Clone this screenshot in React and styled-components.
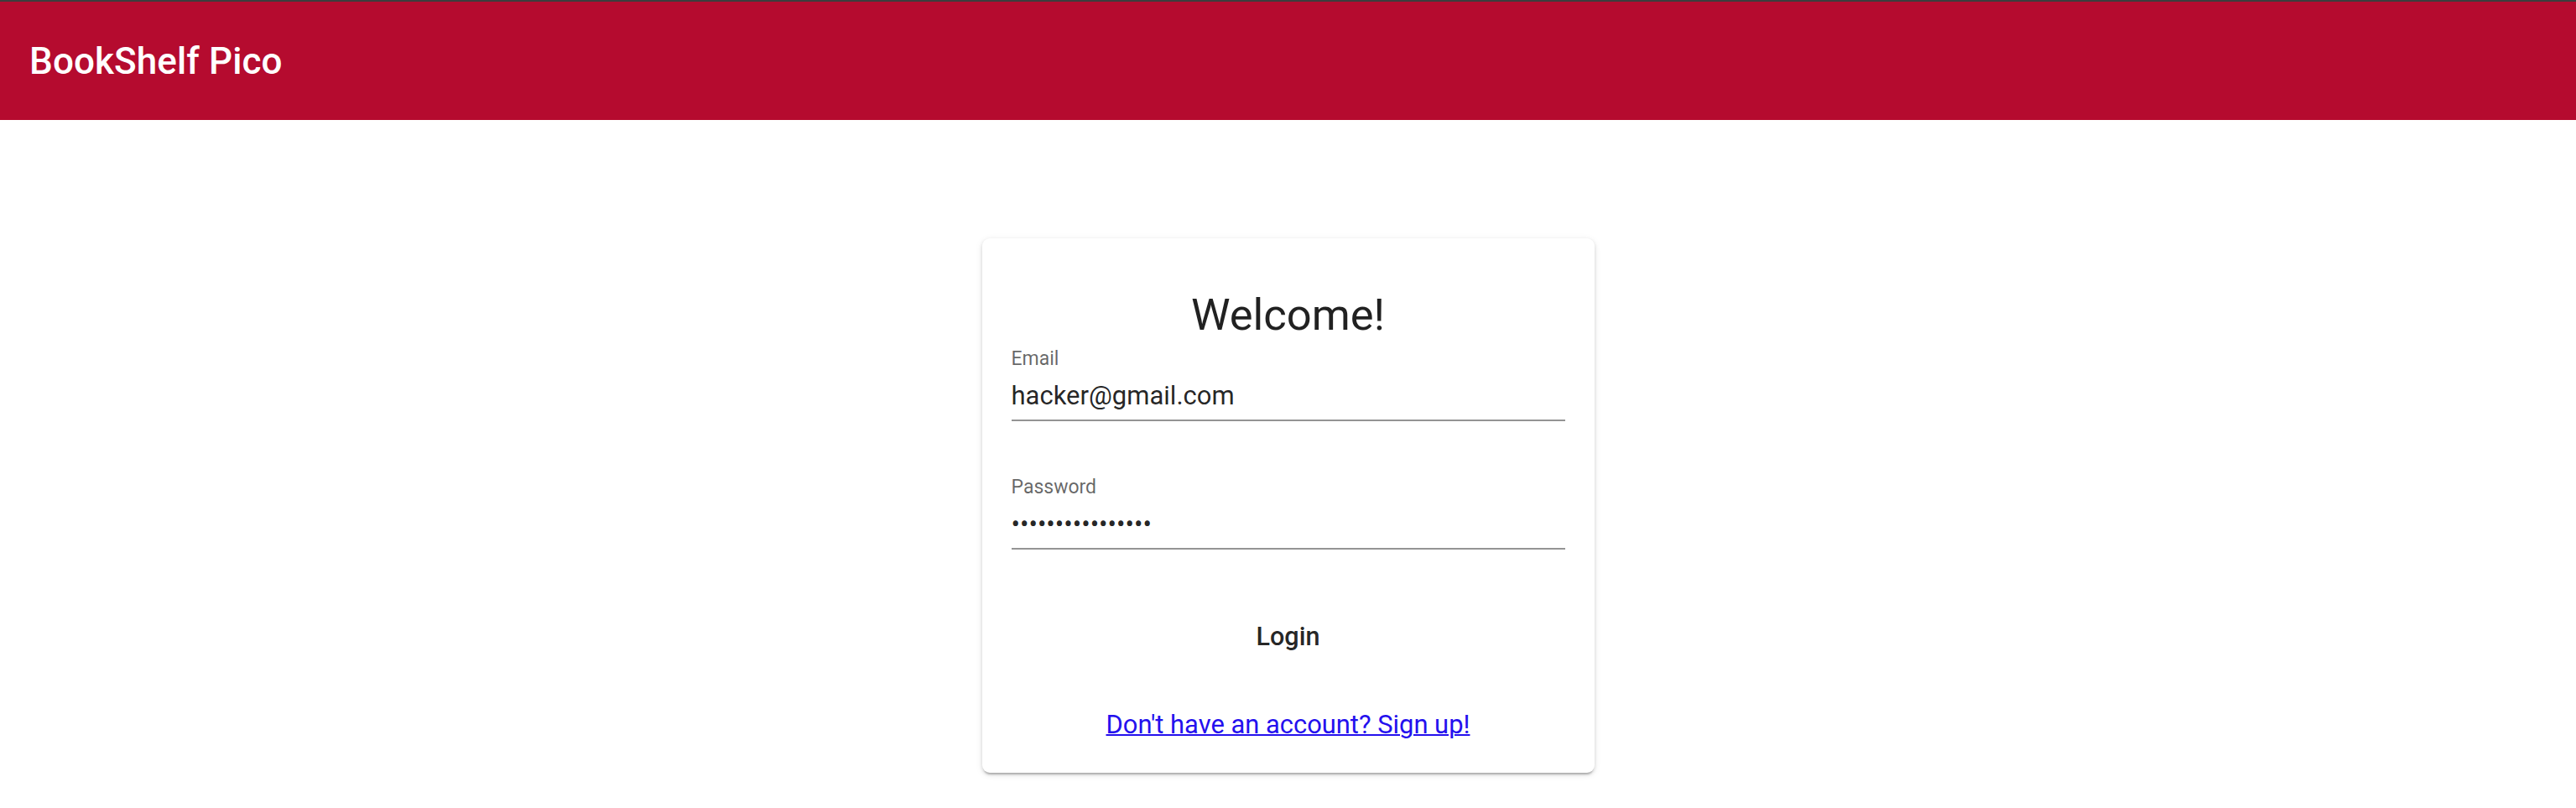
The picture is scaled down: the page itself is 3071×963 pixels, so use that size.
import React from 'react';
import styled, { createGlobalStyle } from 'styled-components';

const GlobalStyle = createGlobalStyle`
    html, body {
        margin: 0;
        padding: 0;
        background: #ffffff;
    }

    body {
        font-family: Roboto, 'Liberation Sans', Arial, sans-serif;
        color: rgba(0, 0, 0, 0.87);
    }
`;

const Page = styled.div`
    min-height: 963px;
    display: flex;
    flex-direction: column;
`;

const Header = styled.header`
    height: 141px;
    border-top: 2px solid #3d3d3d;
    background: #b50b2f;
    display: flex;
    align-items: center;
    padding: 0 35px;
`;

const Brand = styled.h1`
    margin: 0;
    font-size: 44px;
    font-weight: 500;
    letter-spacing: 0.1px;
    color: #ffffff;
`;

const Main = styled.main`
    display: flex;
    justify-content: center;
    padding-top: 141px;
`;

const Card = styled.form`
    width: 730px;
    box-sizing: border-box;
    padding: 35px;
    border-radius: 9px;
    background: #ffffff;
    display: flex;
    flex-direction: column;
    box-shadow: 0 4px 2px -2px rgba(0, 0, 0, 0.2), 0 2px 4px 0 rgba(0, 0, 0, 0.14),
        0 2px 10px 0 rgba(0, 0, 0, 0.08);
`;

const Title = styled.h2`
    margin: 21px 0 6px;
    font-size: 52.5px;
    line-height: 70px;
    font-weight: 400;
    text-align: center;
    color: rgba(0, 0, 0, 0.87);
`;

const Field = styled.label`
    display: flex;
    flex-direction: column;
    margin-top: ${(p) => p.$gap || 0}px;
`;

const FieldLabel = styled.span`
    font-size: 23px;
    line-height: 23px;
    color: rgba(0, 0, 0, 0.6);
`;

const Input = styled.input`
    margin-top: 12px;
    height: 40px;
    padding: 0 0 9px;
    border: none;
    border-bottom: 2px solid rgba(0, 0, 0, 0.42);
    outline: none;
    background: transparent;
    font-family: Roboto, 'Liberation Sans', Arial, sans-serif;
    font-size: 31px;
    color: rgba(0, 0, 0, 0.87);
    box-sizing: content-box;
    width: 100%;
`;

const SubmitButton = styled.button`
    margin-top: 64px;
    padding: 13px 35px;
    border: none;
    background: transparent;
    border-radius: 9px;
    font-family: Roboto, 'Liberation Sans', Arial, sans-serif;
    font-size: 30.6px;
    line-height: 54px;
    font-weight: 500;
    color: rgba(0, 0, 0, 0.87);
    cursor: pointer;
`;

const SignUp = styled.a`
    margin-top: 42px;
    font-size: 30.9px;
    line-height: 45px;
    text-align: center;
    color: #2410ee;
    text-decoration: underline;
    text-decoration-thickness: 2px;
`;

export default function App() {
    return (
        <Page>
            <GlobalStyle />
            <Header>
                <Brand>BookShelf Pico</Brand>
            </Header>
            <Main>
                <Card onSubmit={(e) => e.preventDefault()}>
                    <Title>Welcome!</Title>
                    <Field>
                        <FieldLabel>Email</FieldLabel>
                        <Input type="email" defaultValue="hacker@gmail.com" />
                    </Field>
                    <Field $gap={67}>
                        <FieldLabel>Password</FieldLabel>
                        <Input type="password" defaultValue="hackerpassword12" />
                    </Field>
                    <SubmitButton type="submit">Login</SubmitButton>
                    <SignUp href="#signup">Don't have an account? Sign up!</SignUp>
                </Card>
            </Main>
        </Page>
    );
}
